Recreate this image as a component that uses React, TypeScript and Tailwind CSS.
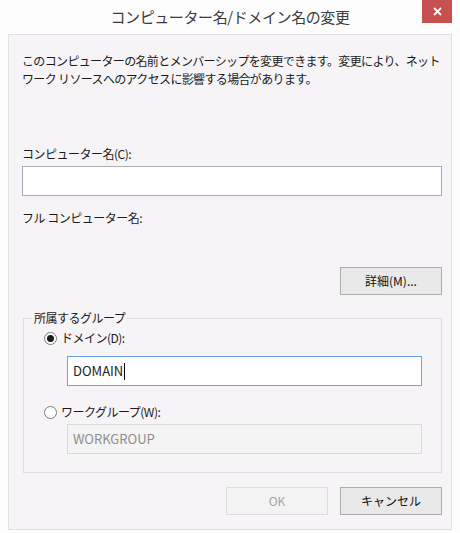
const font = { fontFamily: '"Noto Sans CJK JP", "Noto Sans", sans-serif' };

function Radio({ checked }: { checked: boolean }) {
  return (
    <span className="flex h-[13px] w-[13px] items-center justify-center rounded-full border border-[#7a7a7a] bg-white">
      {checked && <span className="h-[7px] w-[7px] rounded-full bg-[#1b1b1b]" />}
    </span>
  );
}

function Button({ label, disabled }: { label: string; disabled?: boolean }) {
  return (
    <div
      className={`flex h-[28px] w-[102px] items-center justify-center border text-[12px] ${
        disabled
          ? "border-[#dcdcdc] bg-[#f3f3f3] text-[#a3a3a3]"
          : "border-[#adadad] bg-[#e9e9e9] text-[#111]"
      }`}
    >
      {label}
    </div>
  );
}

export default function App() {
  return (
    <div className="flex h-[533px] w-[460px] flex-col bg-[#fdfdfd] text-[#1a1a1a]" style={font}>
      {/* title bar */}
      <div className="relative flex h-[34px] shrink-0 items-center justify-center">
        <span className="text-[15px] tracking-[-0.4px] text-[#3b3b3b]">
          コンピューター名/ドメイン名の変更
        </span>
        <div className="absolute right-[8px] top-0 flex h-[23px] w-[30px] items-center justify-center bg-[#c75050]">
          <svg width="9" height="9" viewBox="0 0 9 9">
            <path d="M1 1 L8 8 M8 1 L1 8" stroke="#fff" strokeWidth="1.8" />
          </svg>
        </div>
      </div>

      {/* dialog body */}
      <div className="mx-[8px] flex flex-col border border-[#e2e0e4] bg-[#f6f4f7] pb-[14px] pl-[13px] pr-[9px] pt-[17px] text-[12px]">
        <p className="whitespace-nowrap leading-[18px] tracking-[-0.65px]">
          このコンピューターの名前とメンバーシップを変更できます。変更により、ネット
          <br />
          ワーク リソースへのアクセスに影響する場合があります。
        </p>

        <div className="mt-[57px] leading-[18px] tracking-[-0.5px]">コンピューター名(C):</div>
        <div className="mt-[3px] h-[30px] w-[420px] border border-[#abadb3] bg-white" />

        <div className="mt-[13px] leading-[18px] tracking-[-0.5px]">フル コンピューター名:</div>

        <div className="mt-[40px] flex justify-end">
          <Button label="詳細(M)..." />
        </div>

        {/* group box */}
        <div className="relative ml-[1px] mt-[23px] flex flex-col border border-[#dedcdf] pb-[18px] pl-[20px] pr-[19px] pt-[10px]">
          <span className="absolute -top-[10px] left-[8px] bg-[#f6f4f7] px-[2px] leading-[18px] tracking-[-0.5px]">
            所属するグループ
          </span>

          <div className="flex h-[18px] items-center gap-[4px] tracking-[-0.5px]">
            <Radio checked />
            <span>ドメイン(D):</span>
          </div>
          <div className="ml-[23px] mt-[9px] flex h-[30px] items-center border border-[#6aa6e6] bg-white pl-[5px] text-[13px] text-[#222]">
            DOMAIN
            <span className="ml-[1px] h-[17px] w-[1px] bg-black" />
          </div>

          <div className="mt-[17px] flex h-[18px] items-center gap-[4px] tracking-[-0.5px]">
            <Radio checked={false} />
            <span>ワークグループ(W):</span>
          </div>
          <div className="ml-[23px] mt-[3px] flex h-[30px] items-center border border-[#dadada] bg-[#f4f4f4] pl-[5px] text-[13px] text-[#8d8d8d]">
            WORKGROUP
          </div>
        </div>

        <div className="mt-[14px] flex justify-end gap-[12px]">
          <Button label="OK" disabled />
          <Button label="キャンセル" />
        </div>
      </div>
    </div>
  );
}
